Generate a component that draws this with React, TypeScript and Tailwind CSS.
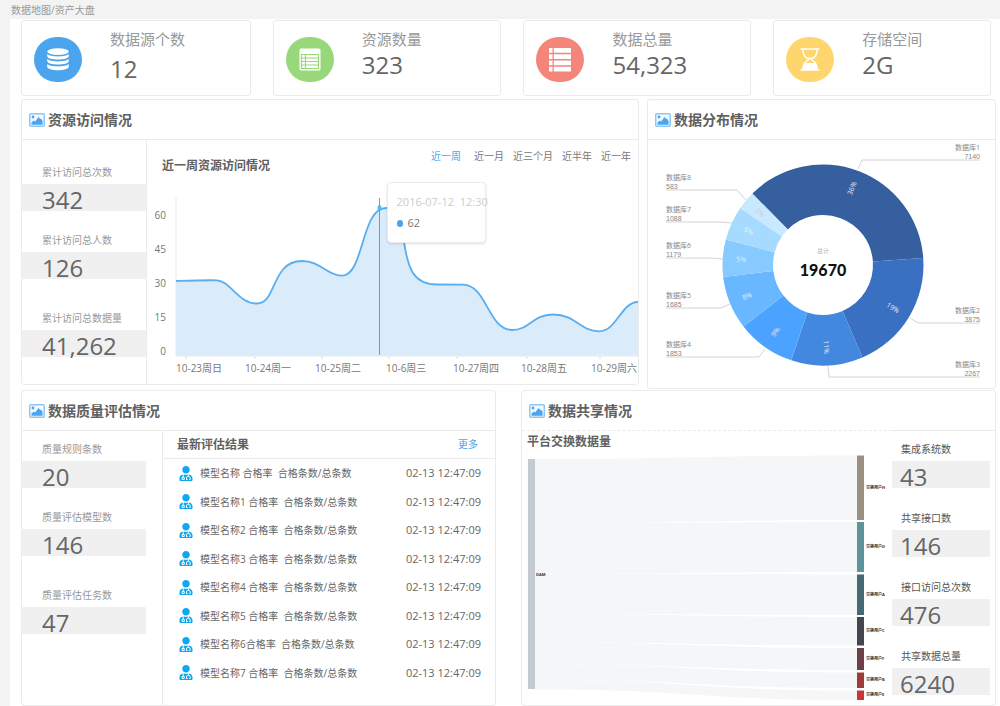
import { FaUserMd } from "react-icons/fa";
import { ReactNode, useState } from "react";

const font = "font-['Open_Sans','Noto_Sans_CJK_SC',sans-serif]";

type Stat = { label: string; value: string };

const visitStats: Stat[] = [
    { label: "累计访问总次数", value: "342" },
    { label: "累计访问总人数", value: "126" },
    { label: "累计访问总数据量", value: "41,262" },
];

const qualityStats: Stat[] = [
    { label: "质量规则条数", value: "20" },
    { label: "质量评估模型数", value: "146" },
    { label: "质量评估任务数", value: "47" },
];

const shareStats: Stat[] = [
    { label: "集成系统数", value: "43" },
    { label: "共享接口数", value: "146" },
    { label: "接口访问总次数", value: "476" },
    { label: "共享数据总量", value: "6240" },
];

const ranges = ["近一周", "近一月", "近三个月", "近半年", "近一年"];

const results = [
    "模型名称 合格率  合格条数/总条数",
    "模型名称1 合格率  合格条数/总条数",
    "模型名称2 合格率  合格条数/总条数",
    "模型名称3 合格率  合格条数/总条数",
    "模型名称4 合格率  合格条数/总条数",
    "模型名称5 合格率  合格条数/总条数",
    "模型名称6合格率  合格条数/总条数",
    "模型名称7 合格率  合格条数/总条数",
];

const days = [
    { label: "10-23周日", x: 29, tick: 39 },
    { label: "10-24周一", x: 98, tick: 108 },
    { label: "10-25周二", x: 168, tick: 175 },
    { label: "10-6周三", x: 239, tick: 242 },
    { label: "10-27周四", x: 306, tick: 310 },
    { label: "10-28周五", x: 374, tick: 380 },
    { label: "10-29周六", x: 444, tick: 453 },
];

const curve =
    "M29 87 C45 86.5 60 86 70 86.3 C84 87.5 91 109.5 110 109.5 C130 109.5 124 67 155 67 C174 67 180 81.7 195 81.7 C217 81.7 214 14 239 14 C248 14 252 25 257 48 C261 74 266 90.5 290 90.5 L316 90.7 C340 91 341 136 365 136 C383 136 385 120.5 406 120.5 C429 120.5 433 137.3 452 137.3 C470 137.3 474 108 491 108";

// leader: where the line leaves the ring, where it bends, and which side it runs to
const databases = [
    { name: "数据库1", value: 7140, color: "#365f9f", leader: [210, 29, 214, 20], side: "right" },
    { name: "数据库2", value: 3875, color: "#3a70c1", leader: [262, 178, 270, 183], side: "right" },
    { name: "数据库3", value: 2267, color: "#4188de", leader: [180, 226, 181, 237], side: "right" },
    { name: "数据库4", value: 1853, color: "#4ca3ff", leader: [117, 209, 111, 217], side: "left" },
    { name: "数据库5", value: 1685, color: "#69b7ff", leader: [82, 164, 73, 168], side: "left" },
    { name: "数据库6", value: 1179, color: "#87caff", leader: [75, 119, 62, 118], side: "left" },
    { name: "数据库7", value: 1088, color: "#a6dbff", leader: [84, 83, 72, 82], side: "left" },
    { name: "数据库8", value: 583, color: "#c8e9ff", leader: [98, 60, 89, 50], side: "left" },
];

const users = [
    { name: "交换用户H", y: 2.5, h: 64.5, color: "#9c9083" },
    { name: "交换用户D", y: 69, h: 50, color: "#5f929b" },
    { name: "交换用户A", y: 121.5, h: 40.5, color: "#456973" },
    { name: "交换用户C", y: 164, h: 28.5, color: "#464650" },
    { name: "交换用户F", y: 195, h: 22, color: "#6d3f49" },
    { name: "交换用户B", y: 219.5, h: 15.5, color: "#a03b3b" },
    { name: "交换用户E", y: 237.5, h: 9.5, color: "#c73734" },
];

const PictureIcon = () => (
    <svg className="h-[14px] w-4 shrink-0" viewBox="0 0 16 14">
        <rect x="0.75" y="0.75" width="14.5" height="12.5" rx="1" fill="#f3f9fe" stroke="#8ec7f6" strokeWidth="1.5" />
        <circle cx="4" cy="4" r="1.4" fill="#4ba5ee" />
        <path d="M2.5 11.8 V9.6 L5 7.6 L6.3 8.4 L9.4 4 L11.3 6 L12 5.6 L13.6 8 V11.8 Z" fill="#4ba5ee" />
    </svg>
);

const DatabaseIcon = () => (
    <svg className="w-[22px]" viewBox="0 0 22 23" fill="#fff">
        <ellipse cx="11" cy="3.6" rx="10.8" ry="3.4" />
        <path d="M0.2 6 C3 9.2 19 9.2 21.8 6 V8 C21.8 12.8 0.2 12.8 0.2 8 Z" />
        <path d="M0.2 11 C3 14.2 19 14.2 21.8 11 V13 C21.8 17.8 0.2 17.8 0.2 13 Z" />
        <path d="M0.2 16 C3 19.2 19 19.2 21.8 16 V18.4 C21.8 23.4 0.2 23.4 0.2 18.4 Z" />
    </svg>
);

const SheetIcon = () => (
    <svg className="w-[22px]" viewBox="0 0 22 23">
        <rect x="0.5" y="0.5" width="21" height="22" rx="1.5" fill="#fff" />
        <path d="M2.5 6.5 H19.5 V20.5 H2.5 Z M2.5 10 H19.5 M2.5 13.5 H19.5 M2.5 17 H19.5 M6.5 6.5 V20.5" fill="none" stroke="#98d87b" strokeWidth="1.2" />
    </svg>
);

const RowsIcon = () => (
    <svg className="w-[22px]" viewBox="0 0 22 24" fill="#fff">
        <path d="M0 0 H3.5 V4.8 H0 Z M4.8 0 H22 V4.8 H4.8 Z" />
        <path d="M0 6.3 H3.5 V11 H0 Z M4.8 6.3 H22 V11 H4.8 Z" />
        <path d="M0 12.6 H3.5 V17.2 H0 Z M4.8 12.6 H22 V17.2 H4.8 Z" />
        <path d="M0 18.8 H3.5 V23.5 H0 Z M4.8 18.8 H22 V23.5 H4.8 Z" />
    </svg>
);

const HourglassIcon = () => (
    <svg className="w-5" viewBox="0 0 20 23">
        <path d="M0.5 1 H19.5 M0.5 22 H19.5" stroke="#fff" strokeWidth="1.6" />
        <path d="M2.8 1 C2.8 7 5 9 8.6 11.5 C5 14 2.8 16 2.8 22 M17.2 1 C17.2 7 15 9 11.4 11.5 C15 14 17.2 16 17.2 22" fill="none" stroke="#fff" strokeWidth="1.5" />
        <path d="M7 9.6 H13 L10 12 Z M4.4 15 H15.6 L17 22 H3 Z" fill="#fff" />
    </svg>
);

const cards = [
    { label: "数据源个数", value: "12", bg: "bg-[#4ba5ee]", gap: "gap-1", icon: <DatabaseIcon /> },
    { label: "资源数量", value: "323", bg: "bg-[#98d87b]", gap: "gap-0", icon: <SheetIcon /> },
    { label: "数据总量", value: "54,323", bg: "bg-[#f3857b]", gap: "gap-0", icon: <RowsIcon /> },
    { label: "存储空间", value: "2G", bg: "bg-[#ffd66e]", gap: "gap-0", icon: <HourglassIcon /> },
];

const Panel = ({ title, children }: { title: string; children: ReactNode }) => (
    <section className="overflow-hidden rounded-[3px] border border-[#ebebeb] bg-white">
        <h2 className="flex h-[39px] items-center gap-[3px] pl-[7px] text-[14px] font-bold text-[#606060]">
            <PictureIcon />
            {title}
        </h2>
        {children}
    </section>
);

const StatColumn = ({ stats }: { stats: Stat[] }) => (
    <dl className="flex flex-col gap-[21px]">
        {stats.map((s) => (
            <div key={s.label} className="last:mt-[10px]">
                <dt className="mb-1 pl-5 text-[10px] leading-4 text-[#999]">{s.label}</dt>
                <dd className="h-[27px] bg-[#f0f0f0] pl-5 text-[24px] leading-8 text-[#666]">{s.value}</dd>
            </div>
        ))}
    </dl>
);

const VisitChart = () => {
    const [range, setRange] = useState(ranges[0]);

    return (
        <div className="relative min-w-0 flex-1">
            <div className="flex h-[54px] justify-between pl-[15px] pr-[7px]">
                <h3 className="pt-[18px] text-[12px] font-bold leading-4 text-[#606060]">近一周资源访问情况</h3>
                <div className="flex items-start gap-[9px] pt-2 text-[10px] leading-4">
                    {ranges.map((r) => (
                        <button
                            key={r}
                            className={r === range ? "text-[#4ba5ee] first:mr-1" : "text-[#777] first:mr-1"}
                            onClick={() => setRange(r)}
                        >
                            {r}
                        </button>
                    ))}
                </div>
            </div>
            <svg className="block w-full text-[10px]" viewBox="0 0 491 186" fill="#777">
                {[60, 45, 30, 15, 0].map((v, i) => (
                    <text key={v} x="19" y={25 + i * 34} textAnchor="end">{v}</text>
                ))}
                <path d="M29 3 V162" stroke="#e8e8e8" />
                <path d={`${curve} V161.5 H29 Z`} fill="#daebfa" />
                <path d="M29 162 H491" stroke="#e2e6ea" />
                <path d={curve} fill="none" stroke="#5aaef0" strokeWidth="1.8" />
                {days.map((d) => (
                    <g key={d.label}>
                        <path d={`M${d.tick} 162 V165`} stroke="#ddd" />
                        <text x={d.x} y="178">{d.label}</text>
                    </g>
                ))}
                <path d="M232.5 4 V161" stroke="#8d949a" />
                <ellipse cx="232.5" cy="14" rx="2" ry="3" fill="#49bdf5" />
            </svg>
            <div className="absolute left-[49%] top-[42px] h-[61px] w-[99px] -translate-x-px rounded border border-[#ececec] bg-white pl-[9px] pt-[11px] shadow">
                <p className="whitespace-pre text-[11px] leading-4 text-[#ccc]">2016-07-12  12:30</p>
                <p className="mt-[3px] flex items-center gap-[5px] text-[11px] leading-5 text-[#777]">
                    <span className="h-[7px] w-[6px] rounded-full bg-[#4ba5ee]" />
                    62
                </p>
            </div>
        </div>
    );
};

const Donut = () => {
    const total = databases.reduce((sum, d) => sum + d.value, 0);
    const cx = 175;
    const cy = 125;
    const point = (deg: number, r: number) => {
        const a = ((deg - 90) * Math.PI) / 180;
        return `${(cx + r * Math.cos(a)).toFixed(2)} ${(cy + r * Math.sin(a)).toFixed(2)}`;
    };
    let end = -44.7;

    return (
        <svg className="block w-full text-[7px]" viewBox="0 0 347 248">
            {databases.map((d) => {
                const start = end;
                end = start + (d.value / total) * 360;
                const mid = (start + end) / 2;
                const [x1, y1, x2, y2] = d.leader;
                const right = d.side === "right";
                const edge = right ? 332 : 18;
                const anchor = right ? "end" : "start";
                return (
                    <g key={d.name}>
                        <path
                            d={`M${point(start, 100.5)} A100.5 100.5 0 0 1 ${point(end, 100.5)} L${point(end, 50)} A50 50 0 0 0 ${point(start, 50)} Z`}
                            fill={d.color}
                        />
                        <text
                            transform={`translate(${point(mid, 82)}) rotate(${mid > 180 || mid < 0 ? mid + 90 : mid - 90})`}
                            textAnchor="middle"
                            dy="2.5"
                            fill={d.value < 1000 ? "#cfcfcf" : "#e8eff7"}
                        >
                            {Math.floor((d.value / total) * 100)}%
                        </text>
                        <path d={`M${x1} ${y1} L${x2} ${y2} H${edge}`} fill="none" stroke="#d4d4d4" />
                        <text x={edge} y={y2 - 10} textAnchor={anchor} fill="#888">{d.name}</text>
                        <text x={edge} y={y2 - 1} textAnchor={anchor} fill="#888" className="font-['Liberation_Sans',sans-serif]">
                            {d.value}
                        </text>
                    </g>
                );
            })}
            <text x={cx} y="113" textAnchor="middle" fill="#b0b0b0" className="text-[6px]">总计</text>
            <text x={cx} y="136" textAnchor="middle" fill="#111" className="font-['Lato',sans-serif] text-[16px] font-black">
                {total}
            </text>
        </svg>
    );
};

const Sankey = () => {
    let from = 6;

    return (
        <svg className="block w-full text-[4px] font-bold" viewBox="0 0 370 252" fill="#333">
            {users.map((u) => {
                const top = from;
                from += u.h;
                return (
                    <g key={u.name}>
                        <path
                            d={`M13 ${top} C174 ${top} 174 ${u.y} 335 ${u.y} V${u.y + u.h} C174 ${u.y + u.h} 174 ${from} 13 ${from} Z`}
                            fill="#f4f6f8"
                        />
                        <rect x="335" y={u.y} width="7" height={u.h} fill={u.color} />
                        <text x="344" y={u.y + u.h / 2 + 1}>{u.name}</text>
                    </g>
                );
            })}
            <rect x="6" y="6" width="7" height="230" fill="#c3cbd1" />
            <text x="14" y="123">DAM</text>
        </svg>
    );
};

export default function App() {
    return (
        <div className={`min-h-screen bg-[#f3f3f3] pl-[10px] ${font}`}>
            <nav className="flex h-[19px] items-center pl-px text-[10px] leading-4 text-[#999]">
                <a href="#map">数据地图</a>/<a href="#assets">资产大盘</a>
            </nav>
            <main className="bg-white pl-[11px] pr-1 pt-px">
                <div className="grid grid-cols-[230fr_229fr_228fr_218fr] gap-[22px] pr-[5px]">
                    {cards.map((c) => (
                        <section key={c.label} className="flex h-[76px] gap-7 rounded-[3px] border border-[#ebebeb] pl-3">
                            <div className={`mt-4 flex h-[45px] w-12 shrink-0 items-center justify-center rounded-full ${c.bg}`}>
                                {c.icon}
                            </div>
                            <div className={`flex flex-col pt-2 ${c.gap}`}>
                                <h2 className="text-[15px] leading-5 text-[#999]">{c.label}</h2>
                                <p className="text-[24px] leading-8 text-[#666]">{c.value}</p>
                            </div>
                        </section>
                    ))}
                </div>

                <div className="mt-[3px] grid grid-cols-[618fr_349fr] items-start gap-2">
                    <Panel title="资源访问情况">
                        <div className="flex border-t border-[#ebebeb]">
                            <div className="w-[125px] shrink-0 border-r border-[#ebebeb] pt-6">
                                <StatColumn stats={visitStats} />
                            </div>
                            <div className="min-w-0 flex-1 pb-1">
                                <VisitChart />
                            </div>
                        </div>
                    </Panel>
                    <Panel title="数据分布情况">
                        <div className="border-t border-[#ebebeb]">
                            <Donut />
                        </div>
                    </Panel>
                </div>

                <div className="mt-px grid grid-cols-2 gap-[25px]">
                    <Panel title="数据质量评估情况">
                        <div className="flex h-full border-t border-[#ebebeb]">
                            <div className="w-[141px] shrink-0 border-r border-[#ebebeb] pr-4 pt-[10px]">
                                <StatColumn stats={qualityStats} />
                            </div>
                            <div className="min-w-0 flex-1">
                                <div className="flex h-7 items-center justify-between border-b border-[#ebebeb] pl-[14px] pr-[17px]">
                                    <h3 className="text-[12px] font-bold text-[#606060]">最新评估结果</h3>
                                    <a href="#more" className="text-[10px] text-[#4ba5ee]">更多</a>
                                </div>
                                <table className="h-[228px] w-full text-left text-[#666]">
                                    <tbody>
                                        {results.map((r) => (
                                            <tr key={r}>
                                                <td className="w-[37px] pl-4">
                                                    <FaUserMd className="h-[15px] w-[14px] text-[#0fa8f0]" />
                                                </td>
                                                <td className="whitespace-pre text-[10px] leading-4">{r}</td>
                                                <td className="w-[90px] whitespace-nowrap pr-[14px] text-right text-[11px] leading-4">02-13 12:47:09</td>
                                            </tr>
                                        ))}
                                    </tbody>
                                </table>
                            </div>
                        </div>
                    </Panel>
                    <Panel title="数据共享情况">
                        <div className="flex">
                            <div className="min-w-0 flex-1 border-t border-dashed border-[#ebebeb]">
                                <h3 className="pl-[5px] text-[12px] font-bold leading-[22px] text-[#606060]">平台交换数据量</h3>
                                <Sankey />
                            </div>
                            <dl className="flex w-[103px] shrink-0 flex-col gap-[22px] border-t border-[#ebebeb] pr-[5px] pt-[10px]">
                                {shareStats.map((s) => (
                                    <div key={s.label}>
                                        <dt className="mb-1 pl-[9px] text-[10px] leading-4 text-[#555]">{s.label}</dt>
                                        <dd className="h-[27px] bg-[#f0f0f0] pl-2 text-[24px] leading-8 text-[#666]">{s.value}</dd>
                                    </div>
                                ))}
                            </dl>
                        </div>
                    </Panel>
                </div>
            </main>
        </div>
    );
}
